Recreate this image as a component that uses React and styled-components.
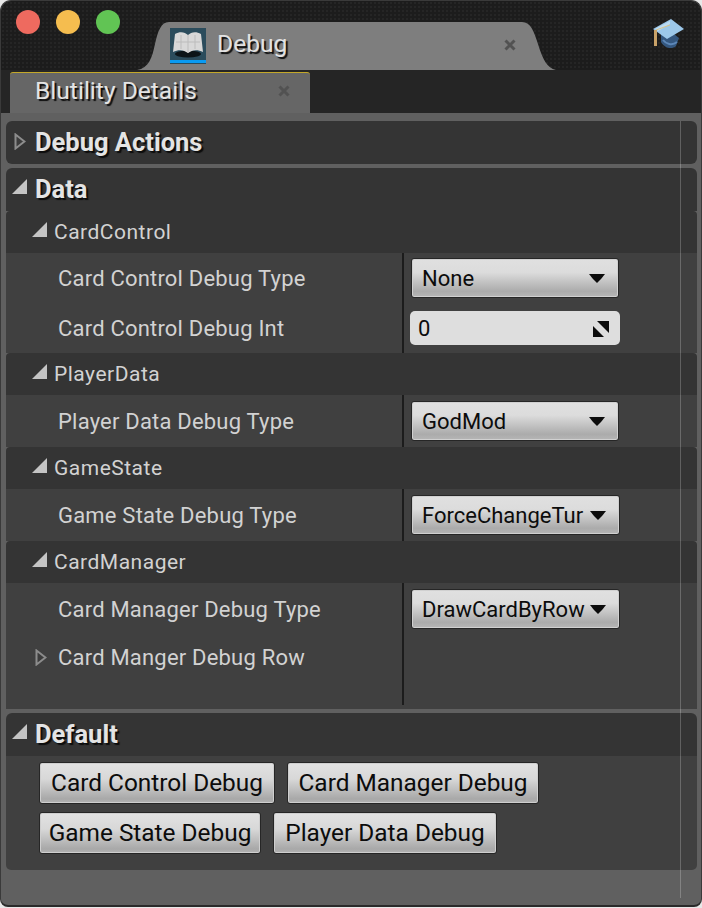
import React from "react";
import styled, { createGlobalStyle } from "styled-components";

const GlobalStyle = createGlobalStyle`
  html, body {
    margin: 0;
    padding: 0;
    background: #e8e8e8;
  }
  * {
    box-sizing: border-box;
  }
`;

const BookIcon = () => (
  <svg width="36" height="36" viewBox="0 0 36 36">
    <rect width="36" height="36" fill="#2b4c5c" />
    <rect y="32" width="36" height="3" fill="#0a9bf2" />
    <ellipse cx="18" cy="26" rx="13" ry="3.5" fill="#0c1418" />
    <path d="M5 6 C10 3 15 4 18 7 C21 4 26 3 31 6 L33 24 C27 21 22 22 18 25 C14 22 9 21 3 24 Z" fill="#d8d8d8" />
    <path d="M18 7 L18 25 M11 7 L11 21 M25 7 L25 21 M6 14 L30 14" stroke="#bcbcbc" strokeWidth="1" fill="none" />
  </svg>
);

const CapIcon = () => (
  <svg width="32" height="32" viewBox="0 0 32 32">
    <path d="M9 16 L9 24 C12 30 20 32 24 28 L27 20 L17 12 Z" fill="#34577f" />
    <path d="M11 22 C14 26 20 28 25 24" stroke="#5c87b8" strokeWidth="2" fill="none" />
    <path d="M1 11 L19 1 L32 11 L15 21 Z" fill="#9cc8ea" />
    <path d="M3 11 L18 3 L18 6 L6 13 Z" fill="#bcdcf4" />
    <path d="M4 12 L18 7" stroke="#d9c48a" strokeWidth="1" fill="none" />
    <rect x="2" y="12" width="3" height="16" fill="#c9a268" />
  </svg>
);

const CloseIcon = () => (
  <svg width="12" height="12" viewBox="0 0 12 12">
    <path d="M1.5 1.5 L10.5 10.5 M10.5 1.5 L1.5 10.5" stroke="#525252" strokeWidth="3" />
  </svg>
);

const ArrowCollapsed = () => (
  <svg width="12" height="17" viewBox="0 0 12 17">
    <path d="M1.5 1.5 L10.5 8.5 L1.5 15.5 Z" fill="#3c3c3c" stroke="#8c8c8c" strokeWidth="2" />
  </svg>
);

const ArrowExpanded = () => (
  <svg width="15" height="15" viewBox="0 0 15 15">
    <path d="M15 0 L15 15 L0 15 Z" fill="#c4c4c4" />
  </svg>
);

const DropArrow = () => (
  <svg width="16" height="9" viewBox="0 0 16 9">
    <path d="M0 0 L16 0 L12 5 L8 9 L4 5 Z" fill="#0c0c0c" />
  </svg>
);

const SpinIcon = () => (
  <svg width="16" height="16" viewBox="0 0 16 16">
    <path d="M4 0 L16 0 L16 12 Z" fill="#0c0c0c" />
    <path d="M0 5 L0 16 L11 16 Z" fill="#0c0c0c" />
  </svg>
);

const Page = styled.div`
  position: relative;
  width: 702px;
  height: 908px;
  overflow: hidden;
`;

const Window = styled.div`
  position: relative;
  width: 702px;
  height: 907px;
  background: #606060;
  border: 1px solid #3a3a3a;
  border-bottom: 2px solid #2a2a2a;
  border-radius: 11px 11px 8px 8px;
  overflow: hidden;
  display: flex;
  flex-direction: column;
`;

const TitleBar = styled.div`
  height: 69px;
  flex: none;
  display: flex;
  align-items: flex-start;
  padding: 9px 0 0 15px;
  background-color: #1c1c1c;
  background-image: radial-gradient(#252525 1px, transparent 1px);
  background-size: 4px 4px;
`;

const Lights = styled.div`
  display: flex;
  gap: 16px;
`;

const Light = styled.div`
  width: 24px;
  height: 24px;
  border-radius: 50%;
  background: ${(p) => p.$color};
`;

const DocTab = styled.div`
  width: 419px;
  height: 48px;
  margin: 12px 0 0 17px;
  padding: 6px 40px 0 33px;
  display: flex;
  align-items: flex-start;
  background: #7e7e7e;
  clip-path: path("M0 48 C12 46 15 36 18 22 C21 9 24 0 32 0 L385 0 C394 0 397 10 401 22 C406 38 410 46 419 48 Z");
`;

const DocTitle = styled.span`
  margin: -2px 0 0 11px;
  font: 400 24.6px/36px Roboto, sans-serif;
  color: #e2e2e2;
  text-shadow: 2px 2px 1px #0c0c0c;
`;

const DocClose = styled.span`
  margin: 11px 0 0 auto;
  display: flex;
`;

const CapSlot = styled.div`
  margin: 8px 0 0 96px;
  display: flex;
`;

const TabBar = styled.div`
  height: 43px;
  flex: none;
  padding: 2px 0 0 9px;
  background: #252525;
`;

const PanelTab = styled.div`
  width: 300px;
  height: 41px;
  display: flex;
  align-items: center;
  padding: 0 20px 4px 25px;
  background: #666;
  border-top: 1px solid #c4a829;
  border-radius: 3px 3px 0 0;
  justify-content: space-between;
`;

const PanelTitle = styled.span`
  font: 400 24.6px/36px Roboto, sans-serif;
  color: #e4e4e4;
  text-shadow: 2px 2px 1px #0c0c0c;
`;

const Body = styled.div`
  flex: 1;
  padding: 8px 4px 0 5px;
  display: flex;
  flex-direction: column;
  gap: 4px;
`;

const Section = styled.section`
  display: flex;
  flex-direction: column;
  background: #606060;
`;

const SectionHeader = styled.div`
  height: 43px;
  display: flex;
  align-items: center;
  padding-bottom: 2px;
  background: #343434;
  border-radius: ${(p) => (p.$closed ? "6px" : "6px 6px 0 0")};
`;

const ArrowSlot = styled.span`
  width: ${(p) => p.$width}px;
  flex: none;
  display: flex;
  justify-content: flex-end;
  padding-right: ${(p) => p.$pad || 0}px;
  margin-bottom: ${(p) => p.$lift}px;
`;

const SectionTitle = styled.span`
  margin-left: 8px;
  font: 700 25.5px/36px Roboto, sans-serif;
  color: #e4e4e4;
  text-shadow: 2px 2px 1px #0c0c0c;
`;

const Category = styled.div`
  height: 42px;
  display: flex;
  align-items: center;
  background: #343434;
  border-radius: 4px 4px 0 0;
`;

const CategoryTitle = styled.span`
  margin-left: 7px;
  font: 400 21px/30px Roboto, sans-serif;
  letter-spacing: 0.5px;
  color: #d2d2d2;
`;

const Rows = styled.div`
  display: flex;
  flex-direction: column;
  background: #404040;
  padding-bottom: ${(p) => p.$bottom || 0}px;
`;

const Row = styled.div`
  height: ${(p) => p.$height}px;
  display: grid;
  grid-template-columns: 396px 1fr;
`;

const RowLabel = styled.div`
  display: flex;
  align-items: ${(p) => (p.$top ? "flex-start" : "center")};
  font: 400 22px/30px Roboto, sans-serif;
  letter-spacing: 0.2px;
  color: #d2d2d2;
  padding: ${(p) => (p.$top ? "8px" : "1px")} 0 0 52px;
`;

const LabelArrow = styled.span`
  flex: none;
  width: 23px;
  margin: 6px 0 0 -23px;
  display: flex;
`;

const RowValue = styled.div`
  border-left: 2px solid #1c1c1c;
  display: flex;
  align-items: center;
  padding-left: 7px;
`;

const Select = styled.div`
  width: ${(p) => (p.$wide ? 209 : 208)}px;
  height: 40px;
  display: flex;
  align-items: center;
  justify-content: space-between;
  padding: 1px 13px 0 10px;
  border: 1px solid #262626;
  border-radius: 3px;
  background: linear-gradient(#e0e0e0 0%, #dcdcdc 35%, #ababab 85%, #b6b6b6 100%);
  box-shadow: inset 0 0 0 1px #d0d0d0;
  font: 400 22px/30px Roboto, sans-serif;
  color: #0c0c0c;
  white-space: nowrap;
`;

const NumberBox = styled.div`
  width: 210px;
  height: 34px;
  margin-left: -1px;
  display: flex;
  align-items: center;
  justify-content: space-between;
  padding: 1px 11px 0 8px;
  border-radius: 5px;
  background: #dedede;
  font: 400 22px/30px Roboto, sans-serif;
  color: #0c0c0c;
`;

const ButtonArea = styled.div`
  height: 114px;
  padding: 6px 0 0 33px;
  display: flex;
  flex-direction: column;
  gap: 8px;
  background: #404040;
  border-radius: 0 0 5px 5px;
`;

const ButtonRow = styled.div`
  display: flex;
  gap: 12px;
`;

const Button = styled.div`
  width: ${(p) => p.$width}px;
  height: 42px;
  display: flex;
  align-items: center;
  justify-content: center;
  border: 1px solid #262626;
  border-radius: 3px;
  background: linear-gradient(#e2e2e2 0%, #d8d8d8 40%, #a8a8a8 90%, #b4b4b4 100%);
  box-shadow: inset 0 0 0 1px #cfcfcf;
  font: 400 24.4px/30px Roboto, sans-serif;
  color: #0c0c0c;
  white-space: nowrap;
`;

const ScrollLine = styled.div`
  position: absolute;
  left: 679px;
  top: 120px;
  width: 1px;
  height: 777px;
  background: rgba(255, 255, 255, 0.22);
`;

const App = () => (
  <Page>
    <GlobalStyle />
    <Window>
      <TitleBar>
        <Lights>
          <Light $color="#ee6a5f" />
          <Light $color="#f5bd4f" />
          <Light $color="#61c454" />
        </Lights>
        <DocTab>
          <BookIcon />
          <DocTitle>Debug</DocTitle>
          <DocClose>
            <CloseIcon />
          </DocClose>
        </DocTab>
        <CapSlot>
          <CapIcon />
        </CapSlot>
      </TitleBar>
      <TabBar>
        <PanelTab>
          <PanelTitle>Blutility Details</PanelTitle>
          <CloseIcon />
        </PanelTab>
      </TabBar>
      <Body>
        <Section>
          <SectionHeader $closed>
            <ArrowSlot $width={21} $pad={1} $lift={1}>
              <ArrowCollapsed />
            </ArrowSlot>
            <SectionTitle>Debug Actions</SectionTitle>
          </SectionHeader>
        </Section>
        <Section>
          <SectionHeader>
            <ArrowSlot $width={21} $lift={4}>
              <ArrowExpanded />
            </ArrowSlot>
            <SectionTitle>Data</SectionTitle>
          </SectionHeader>

          <Category>
            <ArrowSlot $width={41} $lift={6}>
              <ArrowExpanded />
            </ArrowSlot>
            <CategoryTitle>CardControl</CategoryTitle>
          </Category>
          <Rows>
            <Row $height={50}>
              <RowLabel>Card Control Debug Type</RowLabel>
              <RowValue>
                <Select>
                  None
                  <DropArrow />
                </Select>
              </RowValue>
            </Row>
            <Row $height={50}>
              <RowLabel>Card Control Debug Int</RowLabel>
              <RowValue>
                <NumberBox>
                  0
                  <SpinIcon />
                </NumberBox>
              </RowValue>
            </Row>
          </Rows>

          <Category>
            <ArrowSlot $width={41} $lift={6}>
              <ArrowExpanded />
            </ArrowSlot>
            <CategoryTitle>PlayerData</CategoryTitle>
          </Category>
          <Rows>
            <Row $height={52}>
              <RowLabel>Player Data Debug Type</RowLabel>
              <RowValue>
                <Select>
                  GodMod
                  <DropArrow />
                </Select>
              </RowValue>
            </Row>
          </Rows>

          <Category>
            <ArrowSlot $width={41} $lift={6}>
              <ArrowExpanded />
            </ArrowSlot>
            <CategoryTitle>GameState</CategoryTitle>
          </Category>
          <Rows>
            <Row $height={52}>
              <RowLabel>Game State Debug Type</RowLabel>
              <RowValue>
                <Select $wide>
                  ForceChangeTur
                  <DropArrow />
                </Select>
              </RowValue>
            </Row>
          </Rows>

          <Category>
            <ArrowSlot $width={41} $lift={6}>
              <ArrowExpanded />
            </ArrowSlot>
            <CategoryTitle>CardManager</CategoryTitle>
          </Category>
          <Rows $bottom={4}>
            <Row $height={52}>
              <RowLabel>Card Manager Debug Type</RowLabel>
              <RowValue>
                <Select $wide>
                  DrawCardByRow
                  <DropArrow />
                </Select>
              </RowValue>
            </Row>
            <Row $height={70}>
              <RowLabel $top>
                <LabelArrow>
                  <ArrowCollapsed />
                </LabelArrow>
                Card Manger Debug Row
              </RowLabel>
              <RowValue />
            </Row>
          </Rows>
        </Section>
        <Section>
          <SectionHeader>
            <ArrowSlot $width={21} $lift={4}>
              <ArrowExpanded />
            </ArrowSlot>
            <SectionTitle>Default</SectionTitle>
          </SectionHeader>
          <ButtonArea>
            <ButtonRow>
              <Button $width={236}>Card Control Debug</Button>
              <Button $width={252}>Card Manager Debug</Button>
            </ButtonRow>
            <ButtonRow>
              <Button $width={222}>Game State Debug</Button>
              <Button $width={224}>Player Data Debug</Button>
            </ButtonRow>
          </ButtonArea>
        </Section>
      </Body>
      <ScrollLine />
    </Window>
  </Page>
);

export default App;
